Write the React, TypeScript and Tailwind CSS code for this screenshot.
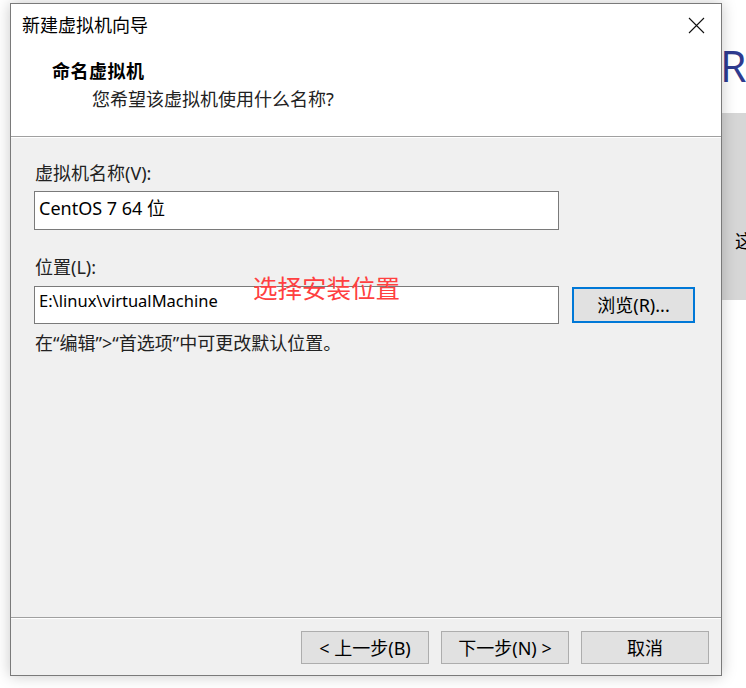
import React from "react";

const font = {
  fontFamily: '"Noto Sans", "Noto Sans CJK SC", sans-serif',
};

function CloseIcon() {
  return (
    <svg width="17" height="17" viewBox="0 0 17 17" fill="none">
      <path d="M1 1 L16 16 M16 1 L1 16" stroke="#111" strokeWidth="1.1" />
    </svg>
  );
}

function WizardButton({ children }: { children: React.ReactNode }) {
  return (
    <button className="flex h-[33px] w-[128px] items-center justify-center border border-[#adadad] bg-[#e1e1e1] text-[18px] leading-none text-black">
      {children}
    </button>
  );
}

export default function App() {
  return (
    <div
      className="flex h-[688px] w-[746px] overflow-hidden bg-white text-black"
      style={font}
      lang="zh-CN"
    >
      <div className="w-[10px] shrink-0" />

      {/* dialog */}
      <div className="relative z-10 mt-[3px] flex h-[673px] w-[712px] shrink-0 flex-col border border-[#7a7a7a] bg-[#f0f0f0] shadow-[0_0_14px_rgba(0,0,0,0.22)]">
        <div className="bg-white">
          {/* title bar */}
          <div className="flex h-[44px] items-center justify-between pl-[11px] pr-[16px] pb-[2px]">
            <span className="text-[18px]">新建虚拟机向导</span>
            <CloseIcon />
          </div>
          {/* header */}
          <div className="h-[88px] pt-[11px]">
            <div className="pl-[41px] text-[18px] font-bold leading-[24px] tracking-[0.5px]">
              命名虚拟机
            </div>
            <div className="mt-[4px] pl-[81px] text-[18px] leading-[24px] text-[#222]">
              您希望该虚拟机使用什么名称?
            </div>
          </div>
        </div>
        <div className="border-t border-b border-t-[#a0a0a0] border-b-white" />

        {/* body */}
        <div className="flex-1 pl-[23px]">
          <div className="mt-[23px] pl-[1px] text-[18px] leading-[24px] text-[#222]">
            虚拟机名称(V):
          </div>
          <div className="mt-[6px] h-[39px] w-[525px] border border-[#7a7a7a] bg-white pl-[4px] pt-[4px] text-[18px] leading-[24px]">
            CentOS 7 64 位
          </div>

          <div className="mt-[25px] pl-[1px] text-[18px] leading-[24px] text-[#222]">
            位置(L):
          </div>
          <div className="mt-[7px] flex items-center gap-[13px]">
            <div className="relative h-[38px] w-[525px] border border-[#7a7a7a] bg-white pl-[4px] pt-[2px] text-[16.5px] leading-[24px]">
              E:\linux\virtualMachine
              <span className="absolute left-[218px] top-[-12px] text-[24.5px] leading-[28px] text-[#ff4040]">
                选择安装位置
              </span>
            </div>
            <button className="flex h-[36px] w-[123px] items-center justify-center border-2 border-[#0078d7] bg-[#e1e1e1] text-[18px] leading-none">
              浏览(R)...
            </button>
          </div>

          <div className="mt-[7px] pl-[1px] text-[18px] leading-[24px] text-[#222]">
            在“编辑”&gt;“首选项”中可更改默认位置。
          </div>
        </div>

        <div className="border-t border-b border-t-[#a0a0a0] border-b-white" />
        {/* footer */}
        <div className="flex h-[56px] justify-end gap-[12px] pr-[12px] pt-[12px]">
          <WizardButton>&lt; 上一步(B)</WizardButton>
          <WizardButton>下一步(N) &gt;</WizardButton>
          <WizardButton>取消</WizardButton>
        </div>
      </div>

      {/* background app behind the dialog */}
      <div className="flex flex-1 flex-col overflow-hidden">
        <div className="h-[113px] pt-[44px]">
          <span
            className="-ml-[2px] text-[43px] leading-none text-[#2e3b8f]"
            style={{ fontFamily: '"Open Sans", sans-serif' }}
          >
            R
          </span>
        </div>
        <div className="h-[187px] bg-[#d6d6d6] pl-[13px] pt-[117px]">
          <span className="text-[18px] leading-none">这</span>
        </div>
      </div>
    </div>
  );
}
